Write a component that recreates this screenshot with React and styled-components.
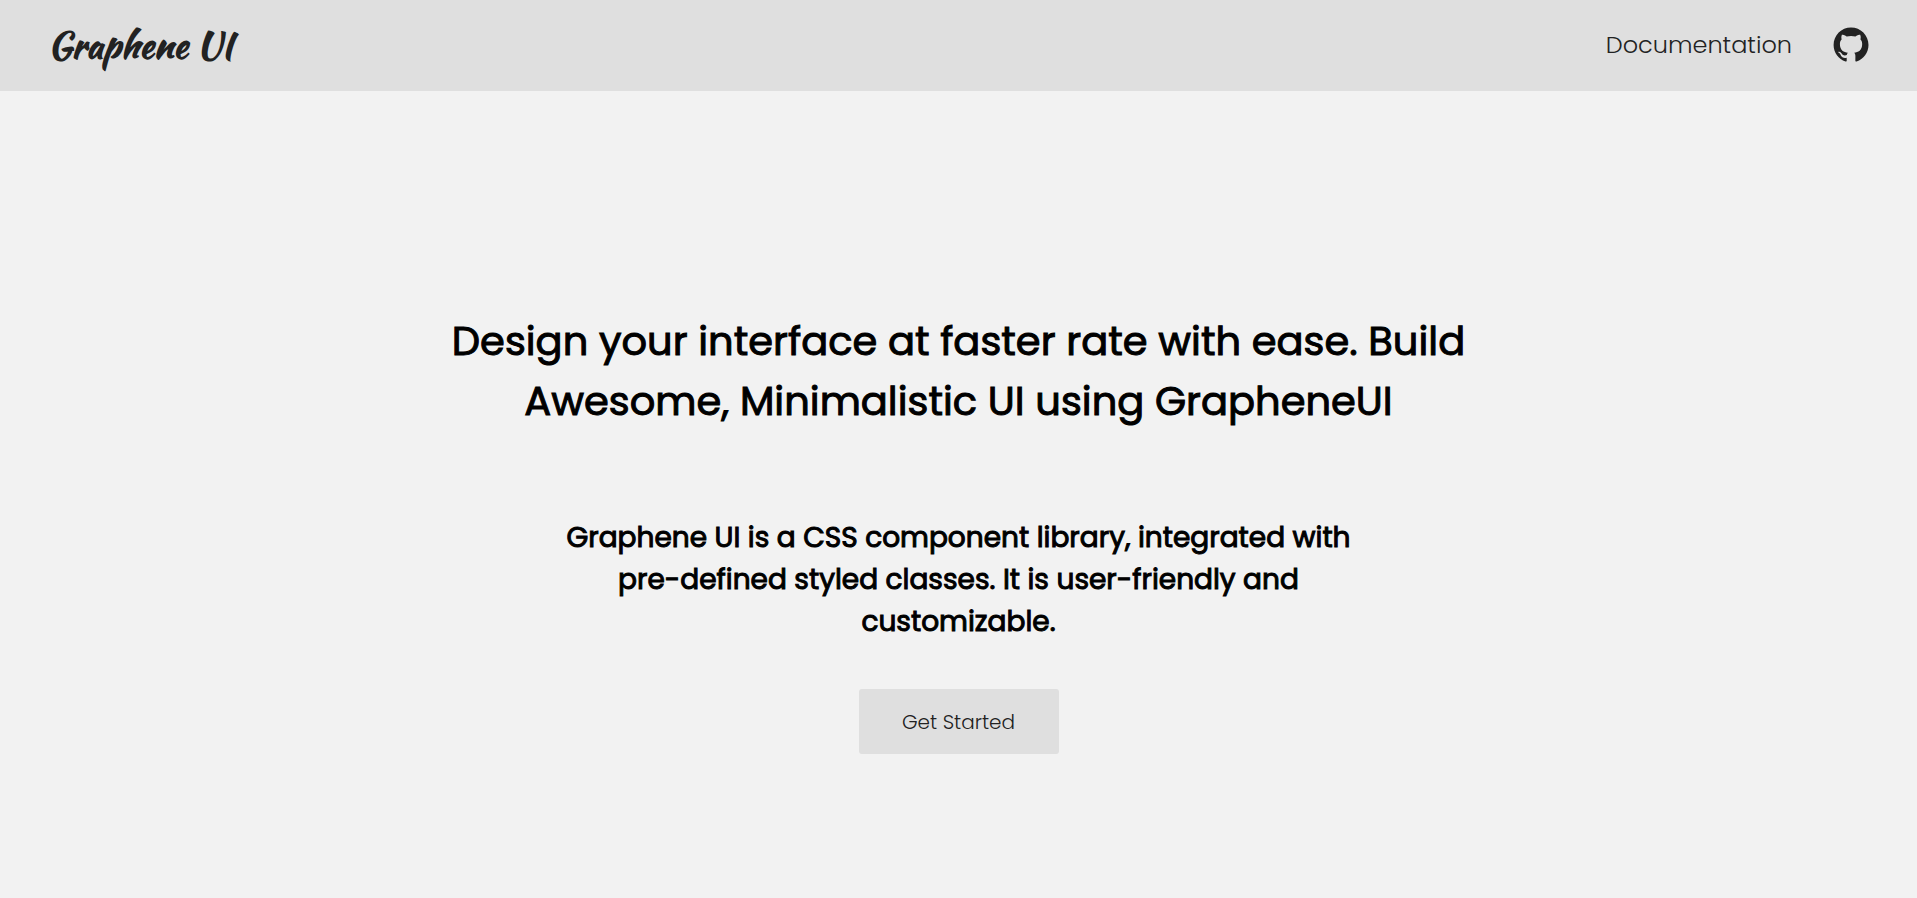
import React from "react";
import styled, { createGlobalStyle } from "styled-components";
import { BiLogoGithub } from "react-icons/bi";

const GlobalStyle = createGlobalStyle`
  * { box-sizing: border-box; }
  body {
    margin: 0;
    background: #f2f2f2;
    color: #000;
    font-family: Poppins, Inter, "Liberation Sans", sans-serif;
  }
`;

const Header = styled.header`
  display: flex;
  align-items: center;
  justify-content: space-between;
  height: 91px;
  padding: 0 45px 2px 48px;
  background: #dfdfdf;
`;

const Brand = styled.a`
  color: #222;
  font-family: "Kaushan Script", Lato, sans-serif;
  font-size: 36px;
  font-weight: 700;
  line-height: 48px;
  text-decoration: none;
`;

const Nav = styled.nav`
  display: flex;
  align-items: center;
  gap: 38px;
`;

const NavLink = styled.a`
  display: flex;
  color: #222;
  font-size: 24px;
  font-weight: 300;
  line-height: 38px;
  text-decoration: none;
`;

const GithubIcon = styled(BiLogoGithub)`
  width: 42px;
  height: 42px;
`;

const Hero = styled.main`
  display: flex;
  flex-direction: column;
  align-items: center;
  padding: 220px 24px 48px;
  text-align: center;
`;

const Title = styled.h1`
  margin: 0 0 86px;
  font-size: 40px;
  font-weight: 400;
  line-height: 60px;
  -webkit-text-stroke: 1px currentColor;
`;

const Lead = styled.p`
  margin: 0 0 46px;
  font-size: 28px;
  font-weight: 400;
  line-height: 42px;
  -webkit-text-stroke: 1px currentColor;
`;

const StartButton = styled.button`
  width: 200px;
  height: 65px;
  border: 0;
  border-radius: 3px;
  background: #dfdfdf;
  color: #222;
  font-family: inherit;
  font-size: 20px;
  font-weight: 300;
  cursor: pointer;
`;

export default function App() {
  return (
    <>
      <GlobalStyle />
      <Header>
        <Brand href="#home">Graphene UI</Brand>
        <Nav>
          <NavLink href="#documentation">Documentation</NavLink>
          <NavLink href="#github" aria-label="GitHub">
            <GithubIcon aria-hidden="true" />
          </NavLink>
        </Nav>
      </Header>
      <Hero>
        <Title>
          Design your interface at faster rate with ease. Build
          <br />
          Awesome, Minimalistic UI using GrapheneUI
        </Title>
        <Lead>
          Graphene UI is a CSS component library, integrated with
          <br />
          pre-defined styled classes. It is user-friendly and
          <br />
          customizable.
        </Lead>
        <StartButton type="button">Get Started</StartButton>
      </Hero>
    </>
  );
}
